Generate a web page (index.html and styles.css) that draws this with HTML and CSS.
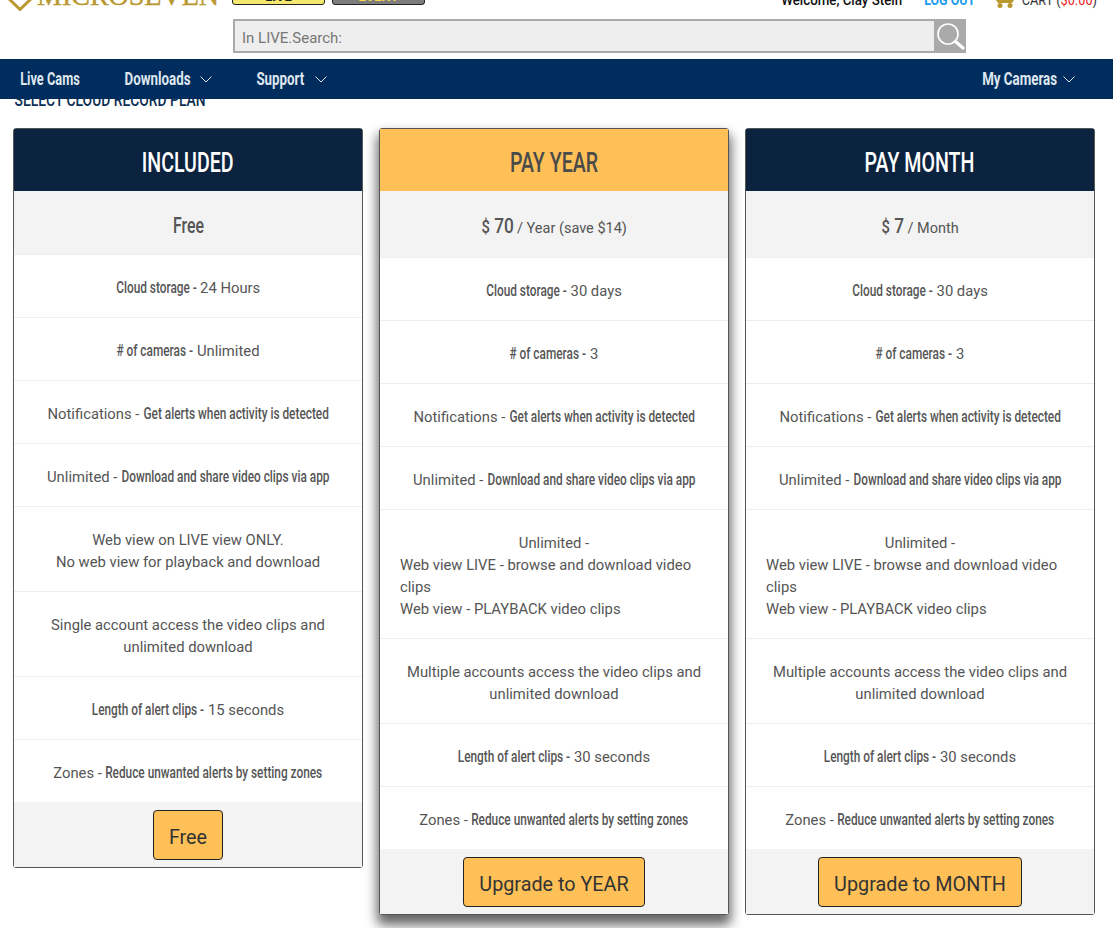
FILE: index.html
```html
<!DOCTYPE html>
<html lang="en">
<head>
<meta charset="utf-8">
<title>Select Cloud Record Plan</title>
<link rel="stylesheet" href="styles.css">
</head>
<body>
<header class="top">
  <div class="logo-col">
    <svg class="logo-mark" width="24" height="12" viewBox="0 0 24 12"><path d="M1 -1 L12 9.5 L23 -1" fill="none" stroke="#b8982f" stroke-width="3"/></svg>
    <span class="logo-text">MICROSEVEN</span>
  </div>
  <div class="top-mid">
    <span class="pill pill-live">LIVE</span>
    <span class="pill pill-event">EVENT</span>
  </div>
  <div class="top-right">
    <span class="welcome squeeze">Welcome, Clay Stein</span>
    <a class="logout squeeze">LOG OUT</a>
    <svg class="cart" width="20" height="8" viewBox="0 0 20 8"><path d="M1 0 H19 L17 3 H3 Z" fill="#b8982f"/><circle cx="5" cy="5.5" r="2.5" fill="#b8982f"/><circle cx="15" cy="5.5" r="2.5" fill="#b8982f"/></svg>
    <span class="cart-text squeeze">CART (<span class="amount">$0.00</span>)</span>
  </div>
</header>
<div class="search-row">
  <div class="search">
    <span class="search-label">In LIVE.Search:</span>
    <span class="search-btn">
      <svg width="30" height="30" viewBox="0 0 30 30"><circle cx="13" cy="13" r="10" fill="none" stroke="#fff" stroke-width="1.6"/><path d="M20.5 20.5 L28 27" stroke="#fff" stroke-width="3.2" stroke-linecap="round"/></svg>
    </span>
  </div>
</div>
<nav class="nav">
  <a class="nav-item nav-live"><span class="squeeze">Live Cams</span></a>
  <a class="nav-item"><span class="squeeze">Downloads</span><svg class="chev" width="12" height="7" viewBox="0 0 12 7"><path d="M.5 .5 L6 6 L11.5 .5" fill="none" stroke="#dfe6ee" stroke-width="1"/></svg></a>
  <a class="nav-item"><span class="squeeze">Support</span><svg class="chev chev-far" width="12" height="7" viewBox="0 0 12 7"><path d="M.5 .5 L6 6 L11.5 .5" fill="none" stroke="#dfe6ee" stroke-width="1"/></svg></a>
  <a class="nav-item nav-cams"><span class="squeeze">My Cameras</span><svg class="chev chev-near" width="12" height="7" viewBox="0 0 12 7"><path d="M.5 .5 L6 6 L11.5 .5" fill="none" stroke="#dfe6ee" stroke-width="1"/></svg></a>
</nav>
<div class="title-clip"><h1 class="title squeeze">SELECT CLOUD RECORD PLAN</h1></div>
<main class="plans">
  <section class="plan">
    <h2 class="plan-head"><span class="squeeze">INCLUDED</span></h2>
    <div class="price price-free"><span class="squeeze">Free</span></div>
    <div class="row"><span class="c squeeze">Cloud storage -</span> 24 Hours</div>
    <div class="row"><span class="c squeeze"># of cameras -</span> Unlimited</div>
    <div class="row">Notifications - <span class="c squeeze">Get alerts when activity is detected</span></div>
    <div class="row">Unlimited - <span class="c squeeze">Download and share video clips via app</span></div>
    <div class="row">Web view on LIVE view ONLY.<br>No web view for playback and download</div>
    <div class="row">Single account access the video clips and unlimited download</div>
    <div class="row"><span class="c squeeze">Length of alert clips -</span> 15 seconds</div>
    <div class="row row-last">Zones - <span class="c squeeze">Reduce unwanted alerts by setting zones</span></div>
    <div class="foot"><a class="btn">Free</a></div>
  </section>
  <section class="plan plan-featured">
    <h2 class="plan-head plan-head-gold"><span class="squeeze">PAY YEAR</span></h2>
    <div class="price"><span class="big squeeze"><span class="dollar">$</span> 70</span> / Year (save $14)</div>
    <div class="row"><span class="c squeeze">Cloud storage -</span> 30 days</div>
    <div class="row"><span class="c squeeze"># of cameras -</span> 3</div>
    <div class="row">Notifications - <span class="c squeeze">Get alerts when activity is detected</span></div>
    <div class="row">Unlimited - <span class="c squeeze">Download and share video clips via app</span></div>
    <div class="row"><div>Unlimited -</div><div class="left">Web view LIVE - browse and download video clips<br>Web view - PLAYBACK video clips</div></div>
    <div class="row">Multiple accounts access the video clips and unlimited download</div>
    <div class="row"><span class="c squeeze">Length of alert clips -</span> 30 seconds</div>
    <div class="row row-last">Zones - <span class="c squeeze">Reduce unwanted alerts by setting zones</span></div>
    <div class="foot"><a class="btn">Upgrade to YEAR</a></div>
  </section>
  <section class="plan">
    <h2 class="plan-head"><span class="squeeze">PAY MONTH</span></h2>
    <div class="price"><span class="big squeeze"><span class="dollar">$</span> 7</span> / Month</div>
    <div class="row"><span class="c squeeze">Cloud storage -</span> 30 days</div>
    <div class="row"><span class="c squeeze"># of cameras -</span> 3</div>
    <div class="row">Notifications - <span class="c squeeze">Get alerts when activity is detected</span></div>
    <div class="row">Unlimited - <span class="c squeeze">Download and share video clips via app</span></div>
    <div class="row"><div>Unlimited -</div><div class="left">Web view LIVE - browse and download video clips<br>Web view - PLAYBACK video clips</div></div>
    <div class="row">Multiple accounts access the video clips and unlimited download</div>
    <div class="row"><span class="c squeeze">Length of alert clips -</span> 30 seconds</div>
    <div class="row row-last">Zones - <span class="c squeeze">Reduce unwanted alerts by setting zones</span></div>
    <div class="foot"><a class="btn">Upgrade to MONTH</a></div>
  </section>
</main>
<script src="script.js"></script>
</body>
</html>
```
FILE: styles.css
```css
* { box-sizing: border-box; }
html, body { margin: 0; padding: 0; height: 928px; overflow: hidden; background: #fff; }
body { font-family: Roboto, "Liberation Sans", sans-serif; color: #555; font-size: 15px; }

/* No condensed face is installed: .squeeze narrows the glyphs, script.js closes the gap left in the flow. */
.squeeze { display: inline-block; white-space: nowrap; transform: scaleX(var(--sx, .8)); transform-origin: center; }

.top { height: 19px; display: flex; align-items: flex-start; overflow: hidden; }
.logo-col { width: 232px; height: 12px; display: flex; align-items: flex-start; flex: none; padding-left: 8px; overflow: hidden; }
.logo-mark { flex: none; }
.logo-text { font-family: "Liberation Serif", serif; font-size: 28px; line-height: 20px; color: #b8982f; margin: -14px 0 0 5px; white-space: nowrap; flex: none; -webkit-text-stroke: .4px #b8982f; }
.top-mid { display: flex; gap: 7px; height: 5px; align-items: flex-end; }
.pill { width: 93px; height: 16px; flex: none; border: 1px solid #222; border-radius: 0 0 3px 3px; display: flex; align-items: flex-end; justify-content: center; font-size: 13px; font-weight: 700; line-height: 14px; }
.pill-live { background: #f4e76e; color: #222; }
.pill-event { background: #7d7d7d; color: #f7d94a; }
.top-right { margin-left: auto; display: flex; align-items: flex-end; height: 8px; padding-right: 16px; white-space: nowrap; font-size: 14px; line-height: 16px; }
.welcome { --sx: .95; color: #111; font-weight: 500; margin-right: 22px; flex: none; }
.logout { --sx: .89; color: #1a9cf0; font-weight: 700; margin-right: 20px; flex: none; }
.cart { margin-right: 7px; flex: none; }
.cart-text { --sx: .91; color: #333; flex: none; }
.amount { color: #e22; }

.search-row { height: 40px; padding-left: 233px; }
.search { width: 733px; height: 34px; display: flex; background: #eee; border: 2px solid #aaa; border-right: 0; }
.search-label { flex: 1; padding-left: 7px; line-height: 34px; font-size: 15px; color: #777; }
.search-btn { width: 32px; height: 34px; margin-top: -2px; background: #aaa; display: flex; align-items: center; justify-content: center; flex: none; }

.nav { height: 40px; background: #002d5e; display: flex; align-items: center; gap: 45px; padding: 0 38px 2px 20px; font-weight: 700; font-size: 18px; color: #dfe6ee; }
.nav-item { display: flex; align-items: center; --sx: .74; }
.nav-live { --sx: .71; }
.nav-cams { margin-left: auto; }
.chev { margin: 2px 0 0 9px; flex: none; }
.chev-far { margin-left: 11px; }
.chev-near { margin-left: 6px; }

.title-clip { height: 29px; overflow: hidden; padding-left: 15px; display: flex; align-items: flex-start; }
.title { --sx: .77; margin: -8px 0 0; font-weight: 500; font-size: 18px; line-height: 18px; color: #0c2f55; flex: none; }

.plans { display: flex; gap: 16px; align-items: flex-start; padding-left: 13px; }
.plan { width: 350px; flex: none; border: 1px solid #555; border-radius: 3px; background: #fff; text-align: center; }
.plan-featured { box-shadow: 0 8px 12px 2px rgba(0,0,0,.6); }
.plan-head { --sx: .7; margin: 0; height: 62px; background: #0c2340; color: #fff; font-weight: 500; font-size: 28px; line-height: 67px; }
.plan-head-gold { background: #ffc157; color: #4a4a4a; }
.price { height: 67px; background: #f3f3f3; border-bottom: 1px solid #eee; font-size: 14.5px; line-height: 70px; }
.price-free { --sx: .72; height: 64px; font-size: 22px; font-weight: 500; line-height: 69px; }
.big { --sx: .82; font-size: 21px; font-weight: 500; }
.dollar { font-size: 18px; }
.row { padding: 22px 20px 18px; line-height: 22px; border-bottom: 1px solid #eee; font-size: 14.8px; }
.row-last { border-bottom: 0; }
.c { --sx: .74; font-size: 16px; font-weight: 500; }
.left { text-align: left; }
.foot { height: 65px; background: #f3f3f3; padding-top: 8px; }
.btn { display: inline-block; height: 50px; padding: 0 15px; background: #ffc157; border: 1px solid #222; border-radius: 4px; line-height: 53px; font-size: 19.8px; color: #333; }
```
FILE: script.js
```js
// Takes the width removed by scaleX out of the layout, for each narrowed text.
document.querySelectorAll('.squeeze').forEach(function (el) {
  var sx = parseFloat(getComputedStyle(el).getPropertyValue('--sx')) || 0.8;
  var trim = el.offsetWidth * (1 - sx) / 2;
  var cs = getComputedStyle(el);
  el.style.marginLeft = (parseFloat(cs.marginLeft) - trim) + 'px';
  el.style.marginRight = (parseFloat(cs.marginRight) - trim) + 'px';
});
```
